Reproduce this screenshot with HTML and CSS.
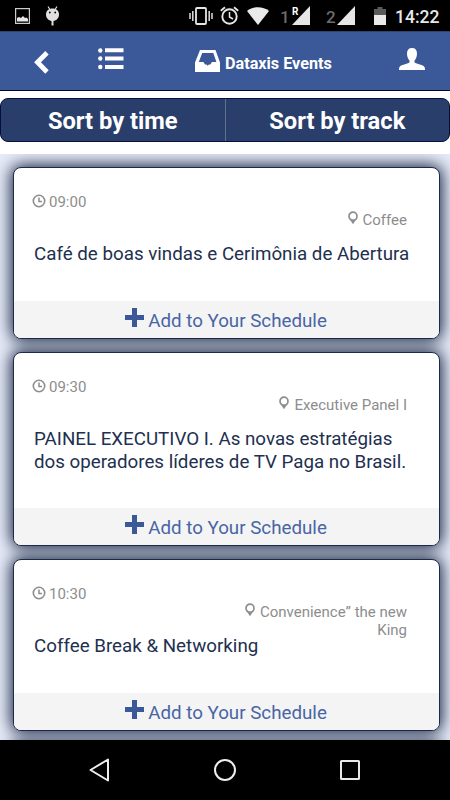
FILE: index.html
```html
<!DOCTYPE html>
<html lang="en">
<head>
    <meta charset="utf-8">
    <meta name="viewport" content="width=device-width, initial-scale=1">
    <title>Dataxis Events</title>
    <link rel="stylesheet" href="styles.css">
</head>
<body>
    <!-- shared icons -->
    <svg class="sprite" width="0" height="0">
        <symbol id="clock" viewBox="0 0 14 14">
            <circle cx="7" cy="7" r="5.7" fill="none" stroke="#8d8d8d" stroke-width="1.6"/>
            <path d="M7 3.5v4h3" fill="none" stroke="#8d8d8d" stroke-width="1.5"/>
        </symbol>
        <symbol id="pin" viewBox="0 0 10 14">
            <path d="M.9 7L5 13.300 9.100 7z" fill="#8d8d8d"/>
            <circle cx="5" cy="5.200" r="4" fill="#fff" stroke="#8d8d8d" stroke-width="1.700"/>
        </symbol>
        <symbol id="plus" viewBox="0 0 19 19">
            <path d="M7 0h5v7h7v5h-7v7H7v-7H0V7h7z" fill="#3b5998"/>
        </symbol>
    </svg>

    <div class="status-bar">
        <svg class="ic-picture" width="15" height="16" viewBox="0 0 15 16">
            <rect x=".6" y=".6" width="13.800" height="14.800" fill="none" stroke="#ccc" stroke-width="1.200"/>
            <path d="M2 13.500V10l2-1 2 1L8 8l2 2 1.500-.5L13 11v2.500z" fill="#e6e6e6"/>
        </svg>
        <svg class="ic-droid" width="15" height="20" viewBox="0 0 15 20">
            <path d="M3 .5l2 3M12 .5l-2 3" stroke="#e0e0e0" stroke-width="1.200"/>
            <path d="M1 8.500C1 4.500 4 2.500 7.500 2.500S14 4.500 14 8.500 11 15 7.500 15 1 12.500 1 8.500z" fill="#e0e0e0"/>
            <path d="M7.500 15v4.500" stroke="#e0e0e0" stroke-width="2"/>
            <circle cx="4.800" cy="6.500" r=".9"/><circle cx="10.200" cy="6.500" r=".9"/>
        </svg>
        <svg class="ic-vibrate" width="24" height="18" viewBox="0 0 24 18">
            <path d="M1 6v6M3.800 4v10M20.200 4v10M23 6v6" stroke="#e0e0e0" stroke-width="1.500"/>
            <rect x="7" y="1" width="10" height="16" rx="1" fill="none" stroke="#e6e6e6" stroke-width="1.800"/>
        </svg>
        <svg class="ic-alarm" width="19" height="19" viewBox="0 0 19 19">
            <circle cx="9.500" cy="10.500" r="7.200" fill="none" stroke="#e6e6e6" stroke-width="1.900"/>
            <path d="M9.500 6v5l3.500 2" fill="none" stroke="#e6e6e6" stroke-width="1.500"/>
            <path d="M.8 4.700L5 1.200M18.200 4.700L14 1.200" stroke="#e6e6e6" stroke-width="1.800"/>
        </svg>
        <svg class="ic-wifi" width="22" height="18" viewBox="0 0 22 18">
            <path d="M11 18L0 4C6-1 16-1 22 4z" fill="#eaeaea"/>
        </svg>
        <span class="sim sim-one">1</span>
        <div class="signal">
            <svg width="18" height="19" viewBox="0 0 18 19"><path d="M18 0v19H0z" fill="#e6e6e6"/></svg>
            <span class="roaming">R</span>
        </div>
        <span class="sim sim-two">2</span>
        <svg class="ic-signal" width="18" height="19" viewBox="0 0 18 19"><path d="M18 0v19H0z" fill="#e6e6e6"/></svg>
        <svg class="ic-battery" width="12" height="18" viewBox="0 0 12 18">
            <path d="M3.500 0h5v2H12v6H0V2h3.500z" fill="#5a5a5a"/>
            <path d="M0 8h12v10H0z" fill="#eaeaea"/>
        </svg>
        <span class="time">14:22</span>
    </div>

    <div class="header">
        <svg class="back" width="16" height="25" viewBox="0 0 16 25">
            <path d="M13 2.700L3.500 12.300 13 22" fill="none" stroke="#fff" stroke-width="4.800"/>
        </svg>
        <svg class="menu" width="26" height="23" viewBox="0 0 26 23">
            <g fill="#fff">
                <circle cx="2.300" cy="3.500" r="2.200"/><circle cx="2.300" cy="11.500" r="2.200"/><circle cx="2.300" cy="20" r="2.200"/>
                <path d="M7 1.200h18.500v4H7zM7 9.500h18.500v4H7zM7 18h18.500v4H7z"/>
            </g>
        </svg>
        <div class="brand">
            <svg width="26" height="24" viewBox="0 0 26 24">
                <path fill-rule="evenodd" d="M5 1h15.500L25 13.500v9.500H0v-9.500zM7.200 4L3.800 13h4.700l1.500 2.500h1.500l1.200 1.200 1.200-1.200h1.500l1.500-2.500h4.500L18.300 4z" fill="#fff"/>
            </svg>
            <h1>Dataxis Events</h1>
        </div>
        <svg class="user" width="26" height="22" viewBox="0 0 26 22">
            <path d="M13 0c3.300 0 5 2 5 5.500 0 3-1 5.500-2.500 7v2c2 1.200 9 2.500 10 4.500.4.800.5 1.800.5 3H0c0-1.200.1-2.200.5-3 1-2 8-3.300 10-4.500v-2C9 11 8 8.500 8 5.500 8 2 9.700 0 13 0z" fill="#fff"/>
        </svg>
    </div>

    <div class="sort">
        <div class="tabs">
            <button>Sort by time</button>
            <button>Sort by track</button>
        </div>
    </div>

    <div class="events">
        <div class="card">
            <div class="info">
                <div class="hour"><svg width="14" height="14"><use href="#clock"/></svg><span>09:00</span></div>
                <div class="place"><svg width="10" height="14"><use href="#pin"/></svg>Coffee</div>
                <div class="title">Café de boas vindas e Cerimônia de Abertura</div>
            </div>
            <div class="add"><svg width="19" height="19"><use href="#plus"/></svg><span>Add to Your Schedule</span></div>
        </div>
        <div class="card tall">
            <div class="info">
                <div class="hour"><svg width="14" height="14"><use href="#clock"/></svg><span>09:30</span></div>
                <div class="place"><svg width="10" height="14"><use href="#pin"/></svg>Executive Panel I</div>
                <div class="title">PAINEL EXECUTIVO I. As novas estratégias<br>dos operadores líderes de TV Paga no Brasil.</div>
            </div>
            <div class="add"><svg width="19" height="19"><use href="#plus"/></svg><span>Add to Your Schedule</span></div>
        </div>
        <div class="card">
            <div class="info">
                <div class="hour"><svg width="14" height="14"><use href="#clock"/></svg><span>10:30</span></div>
                <div class="place"><svg width="10" height="14"><use href="#pin"/></svg>Convenience” the new<br>King</div>
                <div class="title">Coffee Break &amp; Networking</div>
            </div>
            <div class="add"><svg width="19" height="19"><use href="#plus"/></svg><span>Add to Your Schedule</span></div>
        </div>
        <!-- next card, scrolled out of view, only its shadow shows -->
        <div class="card"></div>
    </div>

    <div class="nav-bar">
        <svg width="22" height="26" viewBox="0 0 22 26"><path d="M20 2.500v21L2.500 13z" fill="none" stroke="#eee" stroke-width="2" stroke-linejoin="round"/></svg>
        <svg width="24" height="24" viewBox="0 0 24 24"><circle cx="12" cy="12" r="10" fill="none" stroke="#eee" stroke-width="2"/></svg>
        <svg width="20" height="20" viewBox="0 0 20 20"><rect x="1" y="1" width="18" height="18" rx=".5" fill="none" stroke="#e8e8e8" stroke-width="2"/></svg>
    </div>
</body>
</html>
```

FILE: styles.css
```css
* {
    box-sizing: border-box;
}
body {
    margin: 0;
    width: 450px;
    height: 800px;
    display: flex;
    flex-direction: column;
    overflow: hidden;
    background: #fff;
    font-family: Roboto, "Liberation Sans", sans-serif;
}
svg {
    display: block;
    flex: none;
}
.sprite {
    position: absolute;
}

/* android status bar */
.status-bar {
    height: 31px;
    flex: none;
    display: flex;
    align-items: center;
    padding-left: 15px;
    background: #000;
    color: #e8e8e8;
}
.ic-droid {
    margin-left: 15px;
}
.ic-vibrate {
    margin-left: 129px;
}
.ic-alarm {
    margin-left: 7px;
}
.ic-wifi {
    margin-left: 8px;
}
.sim {
    width: 11px;
    font-size: 17px;
    font-weight: 500;
    color: #6c6c6c;
    padding-top: 2px;
}
.sim-one {
    margin-left: 11px;
}
.sim-two {
    margin-left: 16px;
}
.signal {
    position: relative;
    margin-left: 1px;
}
.roaming {
    position: absolute;
    left: 0;
    top: 0;
    font-size: 10px;
    line-height: 12px;
    font-weight: 700;
    color: #fff;
}
.ic-battery {
    margin-left: 19px;
}
.time {
    margin-left: 9px;
    padding-top: 2px;
    font-size: 17.500px;
    font-weight: 500;
    white-space: nowrap;
}

.header {
    height: 60px;
    flex: none;
    display: flex;
    align-items: center;
    padding-left: 34px;
    background: #3b5998;
    border-top: 1px solid #2d4474;
    border-bottom: 1px solid #05052c;
}
.back {
    margin-top: 2px;
}
.menu {
    margin: -5px 0 0 48px;
}
.brand {
    display: flex;
    align-items: center;
    margin-left: 71px;
    width: 204px;
}
h1 {
    margin: 5px 0 0 4px;
    font-size: 16.200px;
    line-height: 20px;
    font-weight: 700;
    color: #fff;
    white-space: nowrap;
}
.user {
    margin-top: -4px;
}

.sort {
    height: 63px;
    flex: none;
    padding-top: 7px;
}
.tabs {
    display: flex;
    height: 44px;
    border: 1px solid #05103a;
    border-radius: 8px;
    background: #293e6a;
    overflow: hidden;
}
.tabs button {
    flex: 1;
    margin: 0;
    padding: 1px 0 0;
    border: none;
    background: none;
    color: #fff;
    font-family: inherit;
    font-size: 23.700px;
    font-weight: 700;
}
.tabs button + button {
    border-left: 1px solid #65728f;
}

.events {
    flex: 1;
    min-height: 0;
    overflow: hidden;
    position: relative;
    z-index: 0;
    display: flex;
    flex-direction: column;
    gap: 13px;
    padding: 13px 10px 0 13px;
    background: #e6ebf8;
}
.card {
    position: relative;
    flex: none;
    height: 172px;
    display: flex;
    flex-direction: column;
    border: 1px solid #1c2b4b;
    border-radius: 8px;
    background: #fff;
}
/* shadow stays under the neighbouring cards */
.card::before {
    content: "";
    position: absolute;
    inset: 0;
    z-index: -1;
    border-radius: 8px;
    box-shadow: 0 0 16px 3px #14213f;
}
.card.tall {
    height: 194px;
}
.info {
    flex: 1;
    padding: 26px 32px 0 18px;
}
.hour {
    display: flex;
    height: 17px;
    gap: 3px;
    color: #8d8d8d;
    font-size: 15px;
    line-height: 17px;
}
.place {
    display: flex;
    justify-content: flex-end;
    gap: 5px;
    height: 28px;
    color: #8d8d8d;
    font-size: 15px;
    line-height: 18px;
    text-align: right;
}
.title {
    margin: 4px -10px 0 2px;
    color: #22304f;
    font-size: 18.750px;
    line-height: 22.500px;
    white-space: nowrap;
}
.add {
    height: 37px;
    display: flex;
    justify-content: center;
    padding: 7px 1px 0 0;
    gap: 4px;
    border-radius: 0 0 7px 7px;
    background: #f4f4f4;
    color: #4865a5;
    font-size: 18.750px;
    line-height: 27px;
}

.nav-bar {
    height: 60px;
    flex: none;
    display: flex;
    align-items: center;
    justify-content: space-between;
    padding: 0 90px 0 88px;
    background: #000;
}
```
